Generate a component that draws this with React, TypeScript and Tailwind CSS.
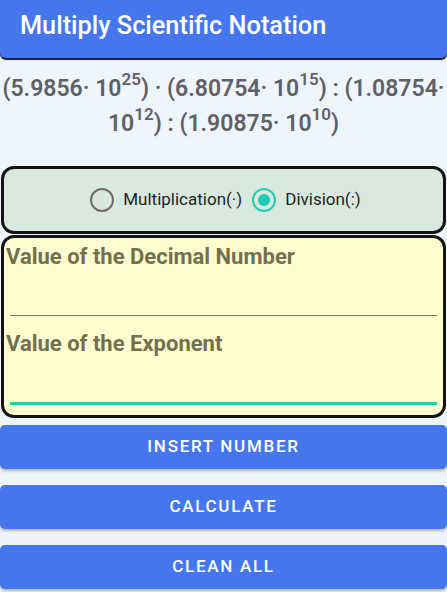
import React from "react";

function Exp({ n }: { n: string }) {
  return <sup className="relative -top-[2px] align-super text-[17px]">{n}</sup>;
}

function Radio({ checked, label }: { checked?: boolean; label: string }) {
  return (
    <label className="flex items-center gap-[9px]">
      <span
        className={`flex h-[24px] w-[24px] items-center justify-center rounded-full border-[2.5px] ${
          checked ? "border-[#1fcdb1]" : "border-[#6b6b6b]"
        }`}
      >
        {checked && <span className="h-[12px] w-[12px] rounded-full bg-[#1fcdb1]" />}
      </span>
      <span className="text-[17px] text-[#1f1f1f]">{label}</span>
    </label>
  );
}

function Field({ label, active }: { label: string; active?: boolean }) {
  return (
    <div className="flex flex-col">
      <span className="pl-[2px] text-[22px] font-bold leading-[26px] text-[#72714f]">{label}</span>
      <div
        className={`mx-[6px] mt-[45px] ${
          active ? "h-[2.5px] bg-[#1fcdb1]" : "h-px bg-[#7b7a5c]"
        }`}
      />
    </div>
  );
}

const buttons = ["INSERT NUMBER", "CALCULATE", "CLEAN ALL"];

export default function App() {
  return (
    <div className="flex h-[592px] w-[447px] flex-col overflow-hidden bg-gradient-to-b from-[#eef5fe] to-[#eef4f8] font-['Roboto',sans-serif]">
      <header className="relative z-10 flex h-[58px] items-center rounded-b-[6px] bg-[#4676ee] px-[20px] pb-[6px] shadow-[0_2px_1px_#1b1b2a]">
        <h1 className="text-[25.3px] font-medium text-white">Multiply Scientific Notation</h1>
      </header>

      <div className="mt-[13px] flex flex-col items-center text-[23px] font-semibold leading-[35px] text-[#5f6165]">
        <p className="whitespace-nowrap">
          (5.9856· 10<Exp n="25" />) · (6.80754· 10<Exp n="15" />) : (1.08754·
        </p>
        <p className="whitespace-nowrap">
          10<Exp n="12" />) : (1.90875· 10<Exp n="10" />)
        </p>
      </div>

      <div className="mx-px mt-[25px] flex h-[68px] items-center justify-center gap-[10px] rounded-[13px] border-[3px] border-[#141414] bg-[#d9e9df] pl-[4px]">
        <Radio label="Multiplication(·)" />
        <Radio checked label="Division(:)" />
      </div>

      <div className="mx-px mt-px flex h-[183px] flex-col gap-[15px] rounded-[13px] border-[3px] border-[#141414] bg-[#fffdcf] pt-[6px]">
        <Field label="Value of the Decimal Number" />
        <Field label="Value of the Exponent" active />
      </div>

      <div className="mt-[7px] flex flex-col gap-[16px]">
        {buttons.map((b) => (
          <button
            key={b}
            className="h-[44px] w-full rounded-[5px] bg-[#4676ee] text-[17px] font-medium tracking-[1.7px] text-white shadow-[0_2px_3px_rgba(0,0,0,0.25)]"
          >
            {b}
          </button>
        ))}
      </div>
    </div>
  );
}
